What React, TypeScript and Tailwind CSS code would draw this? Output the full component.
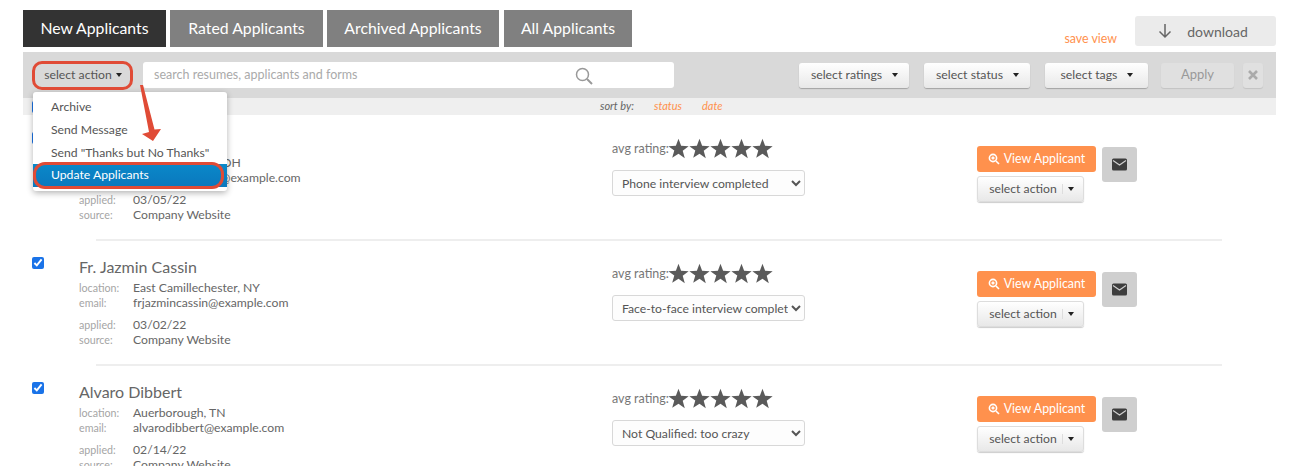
import { useState } from "react";

const font = "[font-family:Lato,'Liberation_Sans',sans-serif]";

const applicants = [
  { name: "Ms. Reynalda Kuhn", location: "Lake Jordanfort, OH", email: "msreynaldakuhn@example.com", applied: "03/05/22", status: "Phone interview completed" },
  { name: "Fr. Jazmin Cassin", location: "East Camillechester, NY", email: "frjazmincassin@example.com", applied: "03/02/22", status: "Face-to-face interview completed" },
  { name: "Alvaro Dibbert", location: "Auerborough, TN", email: "alvarodibbert@example.com", applied: "02/14/22", status: "Not Qualified: too crazy" },
];

const Caret = () => (
  <span className="inline-block w-0 h-0 border-x-[3.500px] border-x-transparent border-t-[4px] border-t-[#222]" />
);

const Star = () => (
  <svg width="21" height="21" viewBox="0 0 24 24" className="fill-[#5a5a5a]">
    <path d="M12 0.8l3 8.1 8.6.4-6.8 5.3 2.4 8.4L12 17.900l-7.200 4.700 2.400-8.400L.4 9.300 9 8.900z" />
  </svg>
);

const FilterButton = ({ label, width }: { label: string; width: string }) => (
  <button className={`${width} h-[25px] pl-[1px] flex items-center justify-center gap-[10px] rounded-[3px] bg-gradient-to-b from-white to-[#e8e8e8] shadow-[0_1px_1px_rgba(0,0,0,0.25)] text-[12.3px] text-[#555]`}>
    {label}
    <Caret />
  </button>
);

const InfoLine = ({ label, value }: { label: string; value: string }) => (
  <div className="flex h-[15px] items-center">
    <span className="w-[54px] text-[10.7px] text-[#a5a5a5]">{label}</span>
    <span className="text-[12.2px] text-[#666]">{value}</span>
  </div>
);

const Row = ({ item, last }: { item: (typeof applicants)[number]; last: boolean }) => {
  const [checked, setChecked] = useState(true);
  return (
    <div>
      <div className="flex h-[123px]">
        <div className="w-[56px] pl-[9px] pt-[16px]">
          <input
            type="checkbox"
            checked={checked}
            onChange={() => setChecked(!checked)}
            className="block w-[12px] h-[12px] m-0 accent-[#1a73e8]"
          />
        </div>
        <div className="w-[533px] pt-[16px]">
          <div className="text-[16px] leading-[20px] text-[#666] mb-[4px]">{item.name}</div>
          <InfoLine label="location:" value={item.location} />
          <InfoLine label="email:" value={item.email} />
          <div className="h-[7px]" />
          <InfoLine label="applied:" value={item.applied} />
          <InfoLine label="source:" value="Company Website" />
        </div>
        <div className="w-[365px] pt-[20px]">
          <div className="flex items-center h-[24px] text-[12.5px] text-[#777]">
            <span className="pt-[2px]">avg rating:</span>
            <span className="flex -ml-[1px]">
              <Star />
              <Star />
              <Star />
              <Star />
              <Star />
            </span>
          </div>
          <select
            defaultValue={item.status}
            className="block mt-[10px] w-[193px] h-[26px] pl-[5px] bg-[#fdfdfd] border border-[#d8d8d8] rounded-[3px] text-[12.2px] text-[#555]"
          >
            <option>{item.status}</option>
          </select>
        </div>
        <div className="flex pt-[30px]">
          <div className="w-[125px]">
            <button className="w-[119px] h-[26px] flex items-center justify-center gap-[4px] rounded-[3px] bg-[#ff914d] text-[12.4px] text-white">
              <svg width="12" height="12" viewBox="0 0 12 12" fill="none" stroke="#fff" strokeWidth="1.6">
                <circle cx="5" cy="5" r="3.6" />
                <path d="M8 8l3 3M3.400 5h3.200M5 3.400v3.200" />
              </svg>
              View Applicant
            </button>
            <button className="mt-[4px] w-[107px] h-[26px] flex items-center justify-center gap-[5px] pl-[2px] rounded-[3px] border border-[#ddd] bg-gradient-to-b from-white to-[#e8e8e8] shadow-[0_1px_1px_rgba(0,0,0,0.2)] text-[12.2px] text-[#555]">
              select action
              <span className="w-px h-[10px] bg-[#ddd]" />
              <Caret />
            </button>
          </div>
          <div className="w-[35px] h-[35px] mt-[1px] flex items-center justify-center rounded-[3px] bg-[#cfcfcf]">
            <svg width="15" height="13" viewBox="0 0 15 13">
              <rect width="15" height="12" y="0.5" rx="1.5" fill="#3d3d3d" />
              <path d="M1 2.500l6.500 4.500 6.500-4.500" fill="none" stroke="#cfcfcf" strokeWidth="1.2" />
            </svg>
          </div>
        </div>
      </div>
      {!last && <div className="ml-[73px] mr-[54px] h-[2px] bg-[#eeeeee]" />}
    </div>
  );
};

export default function App() {
  const [selectAll, setSelectAll] = useState(true);
  return (
    <div className={`relative h-[466px] overflow-hidden bg-white pl-[23px] pr-[22px] ${font}`}>
      {/* tabs and download */}
      <div className="flex h-[52px] pt-[10px]">
        <div className="flex h-[37px] text-[15.8px] text-white">
          <div className="w-[143px] pb-[1px] flex items-center justify-center bg-[#333]">New Applicants</div>
          <div className="ml-[4px] w-[153px] pb-[1px] flex items-center justify-center bg-[#808080]">Rated Applicants</div>
          <div className="ml-[4px] w-[172px] pb-[1px] flex items-center justify-center bg-[#808080]">Archived Applicants</div>
          <div className="ml-[5px] w-[128px] pb-[1px] flex items-center justify-center bg-[#808080]">All Applicants</div>
        </div>
        <div className="ml-auto flex items-start">
          <span className="mt-[20px] mr-[18px] text-[12.4px] text-[#ff914d]">save view</span>
          <button className="mt-[6px] w-[141px] h-[30px] pr-[6px] flex items-center justify-center gap-[14px] rounded-[3px] bg-[#ebebeb] text-[14px] text-[#666]">
            <svg width="16" height="16" viewBox="0 0 16 16" fill="none" stroke="#666" strokeWidth="1.5">
              <path d="M8 1v13M2.500 8.500L8 14l5.500-5.500" />
            </svg>
            download
          </button>
        </div>
      </div>

      {/* filter bar */}
      <div className="flex items-center h-[46px] bg-[#d9d9d9] pl-[10px]">
        <button className="w-[100px] h-[28px] flex items-center justify-center gap-[4px] text-[12.2px] text-[#555]">
          select action
          <Caret />
        </button>
        <div className="ml-[10px] w-[531px] h-[26px] pt-[1px] flex items-center justify-between rounded-[3px] bg-white pl-[11px] pr-[81px] text-[12.5px] text-[#aaa]">
          search resumes, applicants and forms
          <svg width="18" height="18" viewBox="0 0 18 18" fill="none" stroke="#999" strokeWidth="1.5">
            <circle cx="7.500" cy="7.500" r="6" />
            <path d="M12 12l5 5" strokeWidth="2" />
          </svg>
        </div>
        <div className="ml-[125px] flex items-center">
          <FilterButton label="select ratings" width="w-[110px]" />
          <div className="w-[15px]" />
          <FilterButton label="select status" width="w-[106px]" />
          <div className="w-[15px]" />
          <FilterButton label="select tags" width="w-[103px]" />
          <button className="ml-[13px] w-[73px] h-[25px] rounded-[3px] bg-[#e0e0e0] shadow-[0_1px_1px_rgba(0,0,0,0.1)] text-[13px] text-[#999]">Apply</button>
          <button className="ml-[9px] w-[20px] h-[25px] flex items-center justify-center rounded-[3px] bg-[#e0e0e0] shadow-[0_1px_1px_rgba(0,0,0,0.1)]">
            <svg width="10" height="10" viewBox="0 0 10 10" stroke="#aaa" strokeWidth="2.6">
              <path d="M1 1l8 8M9 1l-8 8" />
            </svg>
          </button>
        </div>
      </div>

      {/* sort row */}
      <div className="flex items-center h-[17px] mb-[1px] bg-[#efefef] pl-[9px] text-[11px] italic">
        <input
          type="checkbox"
          checked={selectAll}
          onChange={() => setSelectAll(!selectAll)}
          className="block w-[12px] h-[12px] m-0 accent-[#1a73e8]"
        />
        <span className="ml-[556px] text-[#666]">sort by:</span>
        <span className="ml-[20px] text-[#ff914d]">status</span>
        <span className="ml-[20px] text-[#ff914d]">date</span>
      </div>

      {applicants.map((item, i) => (
        <Row key={item.email} item={item} last={i === applicants.length - 1} />
      ))}

      {/* open dropdown */}
      <div className="absolute left-[33px] top-[92px] w-[194px] h-[99px] pt-[4px] rounded-[3px] bg-white shadow-[0_2px_6px_rgba(0,0,0,0.3)] text-[12.2px] text-[#555]">
        <div className="h-[22.700px] pl-[18px] flex items-center">Archive</div>
        <div className="h-[22.700px] pl-[18px] flex items-center">Send Message</div>
        <div className="h-[22.700px] pl-[18px] flex items-center">Send "Thanks but No Thanks"</div>
        <div className="h-[22.700px] pl-[18px] flex items-center bg-gradient-to-b from-[#0a88c9] to-[#0a78bd] text-white">Update Applicants</div>
      </div>

      {/* red annotations */}
      <div className="absolute left-[32px] top-[61px] w-[101px] h-[29px] rounded-[10px] border-[3px] border-[#e04b36]" />
      <div className="absolute left-[33px] top-[162px] w-[191px] h-[27px] rounded-[12px] border-[3px] border-[#e04b36]" />
      <svg width="30" height="60" viewBox="0 0 30 60" className="absolute left-[135px] top-[84px]">
        <path d="M5 1L8 1L19.500 45.500L26 45L18 57L7 50L14 48z" fill="#e04b36" />
      </svg>
    </div>
  );
}
